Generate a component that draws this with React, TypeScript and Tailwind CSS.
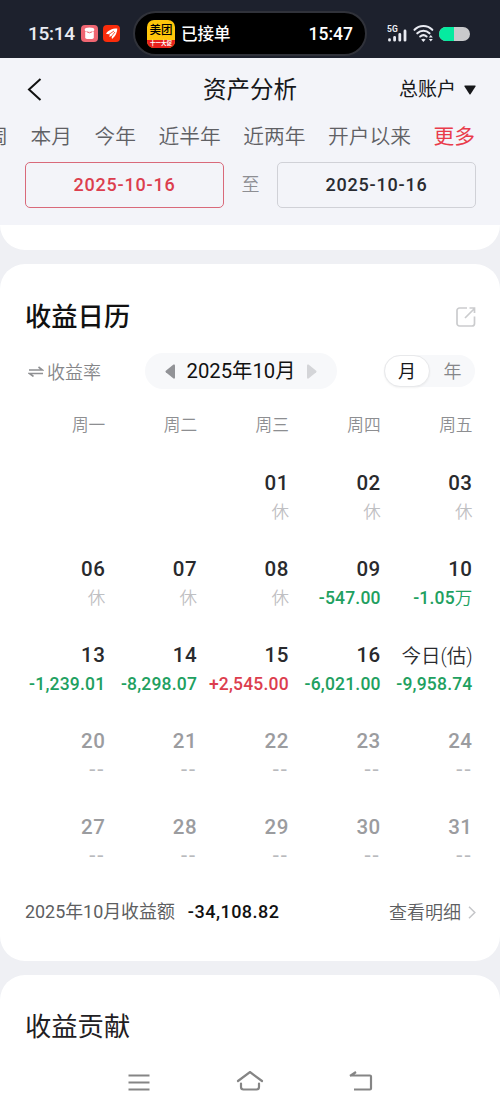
import clsx from "clsx";

interface Day {
  label: string;
  value: string;
  kind: "rest" | "up" | "down" | "future";
}

const RANGES = ["近一周", "本月", "今年", "近半年", "近两年", "开户以来", "更多"];

const WEEKDAYS = ["周一", "周二", "周三", "周四", "周五"];

const DAYS: (Day | null)[] = [
  null,
  null,
  { label: "01", value: "休", kind: "rest" },
  { label: "02", value: "休", kind: "rest" },
  { label: "03", value: "休", kind: "rest" },
  { label: "06", value: "休", kind: "rest" },
  { label: "07", value: "休", kind: "rest" },
  { label: "08", value: "休", kind: "rest" },
  { label: "09", value: "-547.00", kind: "down" },
  { label: "10", value: "-1.05万", kind: "down" },
  { label: "13", value: "-1,239.01", kind: "down" },
  { label: "14", value: "-8,298.07", kind: "down" },
  { label: "15", value: "+2,545.00", kind: "up" },
  { label: "16", value: "-6,021.00", kind: "down" },
  { label: "今日(估)", value: "-9,958.74", kind: "down" },
  { label: "20", value: "--", kind: "future" },
  { label: "21", value: "--", kind: "future" },
  { label: "22", value: "--", kind: "future" },
  { label: "23", value: "--", kind: "future" },
  { label: "24", value: "--", kind: "future" },
  { label: "27", value: "--", kind: "future" },
  { label: "28", value: "--", kind: "future" },
  { label: "29", value: "--", kind: "future" },
  { label: "30", value: "--", kind: "future" },
  { label: "31", value: "--", kind: "future" },
];

function StatusBar() {
  return (
    <div className="flex h-[58px] items-center bg-[#1d212d] pt-[9px] text-white">
      <div className="flex w-[133px] items-center pl-7">
        <span className="w-[53px] pt-px text-[19px] font-medium tracking-[-0.3px] text-[#e9ebf2]">15:14</span>
        <svg className="h-[17px] w-[17px]" viewBox="0 0 17 17">
          <rect width="17" height="17" rx="4" fill="#ef6672" />
          <path d="M4.2 6.5h8.6v5.7a1.8 1.8 0 0 1-1.8 1.8H6a1.8 1.8 0 0 1-1.8-1.8z" fill="#fff" />
          <ellipse cx="8.5" cy="4.7" rx="4.8" ry="2.1" fill="#fff" />
          <path d="M5.8 6.8q2.7 2 5.4 0" fill="none" stroke="#ef6672" strokeWidth="1" />
        </svg>
        <svg className="ml-[5px] h-[17px] w-[17px]" viewBox="0 0 17 17">
          <rect width="17" height="17" rx="4" fill="#fa2c0b" />
          <path d="M3 8.8C5 5.4 9 3.4 14.3 3.5 14.1 8 12 12 9 13.9l-.6-2.8-2 .9.3-2.4z" fill="#fff" />
          <path d="M5.5 9.7 11 6M8 12l4-5" stroke="#fa2c0b" strokeWidth=".8" />
        </svg>
      </div>

      <div className="flex h-[45px] w-[234px] items-center rounded-full border-2 border-[#30323a] bg-black pr-3 pl-3">
        <div className="flex h-7 w-7 flex-col overflow-hidden rounded-[7px] bg-[#ffc60b] text-center">
          <span className="h-[20px] text-[11.5px] leading-[21px] font-medium whitespace-nowrap text-black">美团</span>
          <span className="h-2 bg-[#e8201d] text-[5.5px] leading-[7px] font-bold whitespace-nowrap">十一大促</span>
        </div>
        <span className="ml-[6px] pt-[2px] text-[16.5px] leading-6 font-medium">已接单</span>
        <span className="ml-auto pt-[2px] text-[17.5px] font-medium">15:47</span>
      </div>

      <svg className="ml-[20px] h-[20px] w-[22px]" viewBox="0 0 22 20">
        <text x="0" y="8" fontSize="8.5" fontWeight="700" fill="#e9ebf2">
          5G
        </text>
        <g stroke="#e9ebf2" strokeWidth="2.8" strokeLinecap="round">
          <path d="M2.5 15.7v.5M7.6 13.3v2.9M12.8 10.3v5.9M18 7v9.2" />
        </g>
      </svg>
      <svg className="ml-1 h-[20px] w-[21px]" viewBox="0 0 21 20">
        <g fill="none" stroke="#e9ebf2" strokeWidth="2.1" strokeLinecap="round">
          <path d="M1.5 5.8C6.5.8 14.2.8 19.3 5.8" />
          <path d="M4.3 9.3c3.5-3.4 8.7-3.4 12.2 0" />
          <path d="M7.2 12.5c1.9-1.7 4.5-1.7 6.4 0" />
        </g>
        <path d="m10.4 18-2.2-2.5q2.2-1.6 4.4 0z" fill="#e9ebf2" />
        <path d="m17.8 11 2 2.4h-4zM17.8 17.5l2-2.4h-4z" fill="#e9ebf2" />
      </svg>
      <div className="ml-[5px] flex h-[14px] w-[31px] overflow-hidden rounded-full bg-[#c9cacc]">
        <div className="w-[15px] bg-[#05eba0]" />
      </div>
    </div>
  );
}

function DateField({ value, active }: { value: string; active?: boolean }) {
  return (
    <div
      className={clsx(
        "flex h-[46px] w-[199px] items-center justify-center rounded-[5px] border pb-px text-[18px] font-medium tracking-[0.8px]",
        active ? "border-[#d9697a] text-[#dc3e4e]" : "border-[#d0d1d7] text-[#292b31]",
      )}
    >
      {value}
    </div>
  );
}

function Header() {
  return (
    <div className="flex h-[167px] flex-col bg-[#f3f4f9]">
      <div className="grid h-[60px] grid-cols-3 items-center pr-6 pl-[27px]">
        <svg className="mt-px h-6 w-4" viewBox="0 0 16 24" fill="none" stroke="#111" strokeWidth="2">
          <path d="M13.5 2 2 12.5 13.5 23" />
        </svg>
        <span className="-ml-[3px] pt-[5px] text-center text-[23.5px] whitespace-nowrap text-[#17181b]">资产分析</span>
        <div className="flex items-center justify-end pt-[3px]">
          <span className="pt-px text-[19px] text-[#17181b]">总账户</span>
          <svg className="ml-2 h-[10px] w-3" viewBox="0 0 12 10" fill="#17181b">
            <path d="M1 .5h10q1 0 .5 1L6.7 9q-.7 1-1.4 0L.5 1.5Q0 .5 1 .5z" />
          </svg>
        </div>
      </div>

      <div className="flex h-[36px] items-center justify-end gap-[22.5px] overflow-hidden pt-[4px] pr-[25px] text-[20.75px] font-[350] whitespace-nowrap text-[#5f6064]">
        {RANGES.map((range) => (
          <span key={range} className={clsx("shrink-0", range === "更多" && "font-normal text-[#e93b4b]")}>
            {range}
          </span>
        ))}
      </div>

      <div className="mt-2 flex items-center justify-between pr-6 pl-[25px]">
        <DateField value="2025-10-16" active />
        <span className="pb-px text-[18px] font-[350] text-[#8d8e93]">至</span>
        <DateField value="2025-10-16" />
      </div>
    </div>
  );
}

function MonthPicker() {
  return (
    <div className="flex h-[36px] items-center pr-[25px] pl-[28px] text-[18px] font-[350] text-[#858689]">
      <svg className="h-[11px] w-4" viewBox="0 0 16 11" fill="none" stroke="#8f9093" strokeWidth="1.6">
        <path d="M1 4h13.5l-4-3M15 7.500H1.500l4 3" />
      </svg>
      <span className="ml-[3px] pt-[3px]">收益率</span>

      <div className="ml-[44px] flex h-[36px] w-[192px] items-center justify-between rounded-full bg-[#f7f8fa] px-5 font-normal text-[#111]">
        <svg className="h-[15px] w-[10px]" viewBox="0 0 10 15" fill="#929397">
          <path d="M8.5.5Q10 0 10 1.5v12q0 1.5-1.5 1L.8 8.3q-.8-.8 0-1.6z" />
        </svg>
        <span className="text-[20.3px] whitespace-nowrap">2025年10月</span>
        <svg className="h-[15px] w-[10px]" viewBox="0 0 10 15" fill="#d4d5d8">
          <path d="M1.5.5Q0 0 0 1.5v12q0 1.5 1.5 1l7.7-6.2q.8-.8 0-1.6z" />
        </svg>
      </div>

      <div className="ml-auto flex h-[32px] w-[91px] items-center rounded-full bg-[#f7f8fa]">
        <span className="flex h-[32px] w-[46px] items-center justify-center rounded-full border border-[#e8e9eb] bg-white font-normal text-[#17181b] shadow-xs">
          月
        </span>
        <span className="flex-1 text-center">年</span>
      </div>
    </div>
  );
}

function DayCell({ day }: { day: Day | null }) {
  if (!day) return <div className="h-[86px]" />;
  const isToday = day.label.startsWith("今日");

  return (
    <div className="flex h-[86px] flex-col items-end whitespace-nowrap">
      <span
        className={clsx(
          "h-[28px]",
          isToday ? "text-[19.5px] leading-[33px] font-[350]" : "text-[20.5px] leading-[30px] font-medium tracking-[0.5px]",
          day.kind === "future" ? "text-[#9b9c9f]" : "text-[#292a2d]",
        )}
      >
        {day.label}
      </span>
      <span
        className={clsx(
          "h-[30px]",
          day.kind === "future" ? "text-[22px] leading-[31px]" : "text-[17.5px]",
          day.kind === "rest" && "leading-[33px] font-[350] text-[#bfc0c3]",
          day.kind === "future" && "tracking-[2px] text-[#b9babd]",
          (day.kind === "up" || day.kind === "down") && "leading-[32px] font-medium tracking-[0.2px]",
          day.kind === "up" && "text-[#dc3e4e]",
          day.kind === "down" && "text-[#21a060]",
        )}
      >
        {day.value.replace("万", "")}
        {day.value.endsWith("万") && <span className="font-[350]">万</span>}
      </span>
    </div>
  );
}

function CalendarCard() {
  return (
    <div className="flex h-[697px] flex-col rounded-[25px] bg-white">
      <div className="mt-[32px] flex h-[40px] items-center justify-between pr-6 pl-[25px]">
        <h2 className="pt-[4px] text-[26.3px] font-medium text-[#111]">收益日历</h2>
        <svg className="mt-[2px] h-5 w-5" viewBox="0 0 20 20" fill="none" stroke="#cbccce" strokeWidth="1.7">
          <path d="M11 1H3.5A2.5 2.5 0 0 0 1 3.5v13A2.5 2.5 0 0 0 3.5 19H16a2.5 2.5 0 0 0 2.5-2.5V9.500" />
          <path d="M9 11 18 2M13.5 1H18.500v5" />
        </svg>
      </div>

      <div className="mt-[17px]">
        <MonthPicker />
      </div>

      <div className="mt-[21px] grid h-[30px] grid-cols-5 items-center pt-[2px] pr-[27.5px] pl-[13.5px] text-right text-[16.7px] font-[350] text-[#8d8e91]">
        {WEEKDAYS.map((name) => (
          <span key={name}>{name}</span>
        ))}
      </div>

      <div className="mt-[28px] grid grid-cols-5 pr-[27.5px] pl-[13.5px]">
        {DAYS.map((day, i) => (
          <DayCell key={i} day={day} />
        ))}
      </div>

      <div className="-mt-px flex h-[30px] items-center pr-6 pl-[25px] text-[18px] font-[350] whitespace-nowrap text-[#5d5e61]">
        <span className="text-[17.9px] font-normal">2025年10月收益额</span>
        <span className="ml-[13px] pb-px font-medium tracking-[0.5px] text-[#111]">-34,108.82</span>
        <span className="ml-auto">查看明细</span>
        <svg className="ml-[7px] h-[13px] w-2" viewBox="0 0 8 13" fill="none" stroke="#c5c6c9" strokeWidth="1.5">
          <path d="m1 .8 5.8 5.7L1 12.2" />
        </svg>
      </div>
    </div>
  );
}

function SystemNav() {
  return (
    <div className="mt-[24px] flex h-[26px] justify-between px-[126px]">
      <svg className="h-[26px] w-[26px]" viewBox="0 0 26 26" stroke="#858585" strokeWidth="2.2">
        <path d="M2.5 4.5h21M2.500 11.500h21M2.500 18.500h21" />
      </svg>
      <svg
        className="h-[26px] w-[28px]"
        viewBox="0 0 28 26"
        fill="none"
        stroke="#858585"
        strokeWidth="2.2"
        strokeLinecap="round"
      >
        <path d="m2 10 12-9 12 9M5 12.500V16q0 2.500 2.500 2.500h13Q23 18.500 23 16v-3.500" />
      </svg>
      <svg className="h-[26px] w-[26px]" viewBox="0 0 26 26" fill="none" stroke="#858585" strokeWidth="2.2">
        <path d="M3 4.500h19q1 0 1 1v12q0 1-1 1H6M2 5l6-4" />
      </svg>
    </div>
  );
}

export default function App() {
  return (
    <div className="h-[1111px] w-[500px] overflow-hidden bg-[#eff0f4] font-[Roboto,'Noto_Sans_CJK_SC',sans-serif]">
      <StatusBar />
      <Header />
      <div className="flex flex-col gap-[14px]">
        <div className="h-[25px] rounded-b-[25px] bg-white" />
        <CalendarCard />
        <div className="h-[136px] rounded-t-[25px] bg-white pt-[32px]">
          <h2 className="h-[40px] pl-[25px] text-[26.3px] leading-[40px] text-[#1f2023]">收益贡献</h2>
          <SystemNav />
        </div>
      </div>
    </div>
  );
}
